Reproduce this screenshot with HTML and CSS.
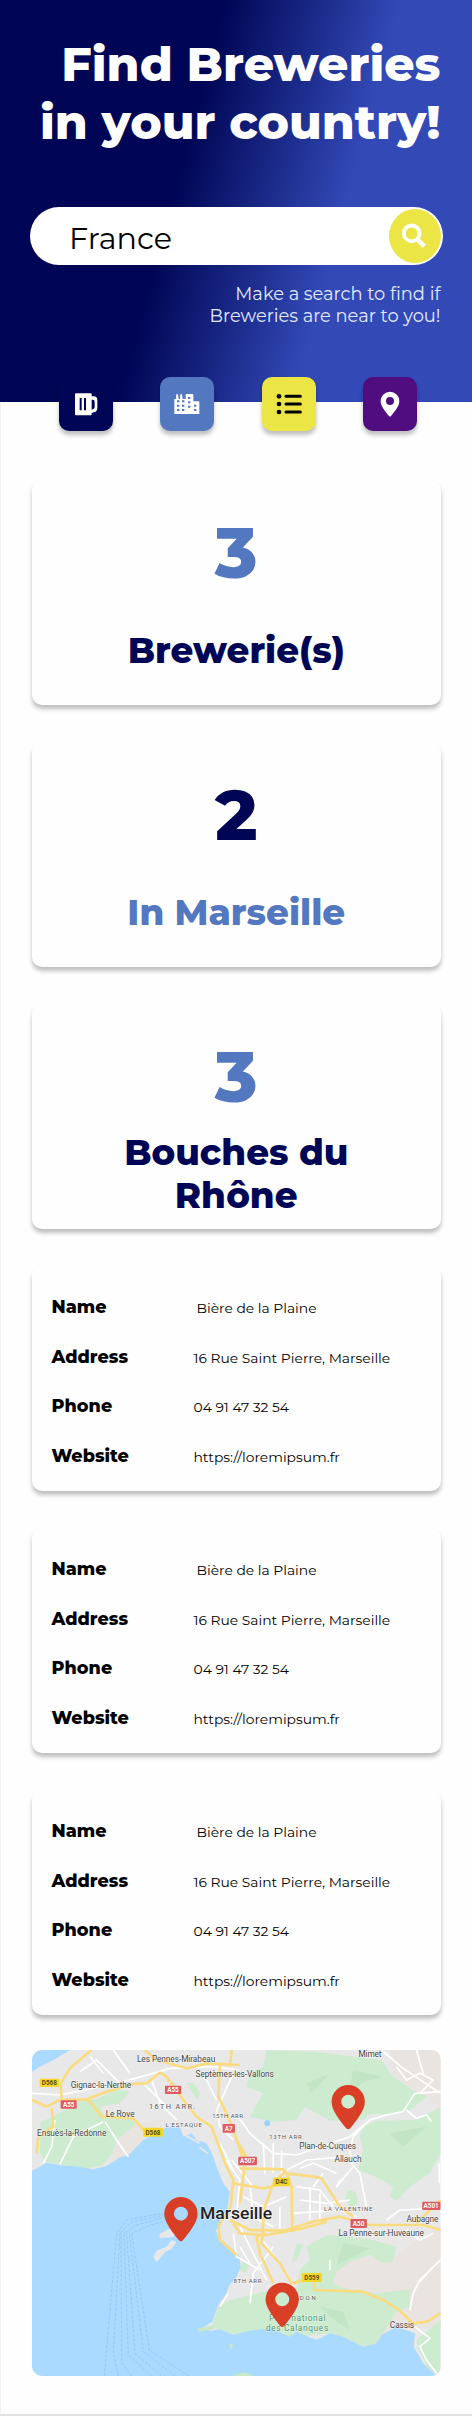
FILE: index.html
```html
<!DOCTYPE html>
<html lang="en">
<head>
<meta charset="utf-8">
<title>Find Breweries</title>
<link rel="stylesheet" href="styles.css">
</head>
<body>
<header class="hero">
  <h1 class="hero-title">Find Breweries<br>in your country!</h1>
  <div class="search">
    <span class="search-value">France</span>
    <button class="search-button" aria-label="Search">
      <svg width="26" height="26" viewBox="0 0 26 26" fill="none" stroke="#fff"><circle cx="10.7" cy="10.4" r="7.9" stroke-width="3.8"/><path d="M16.3 16.4l7 7" stroke-width="4.4"/></svg>
    </button>
  </div>
  <p class="hero-hint">Make a search to find if<br>Breweries are near to you!</p>
</header>
<nav class="tabs">
  <a class="tab tab-beer"><svg width="54" height="54" viewBox="0 0 162 162"><path fill="#fff" fill-rule="evenodd" d="M51 49h44q3 0 3 3v6h6q11 0 11 12v22q0 12-11 14l-6 2v4q0 3-3 3H51q-3 0-3-3V52q0-3 3-3zM98 68v30l5-2q4-1 4-6V75q0-7-5-7zM62 63v37h6V63zM75 63v37h6V63z"/></svg></a>
  <a class="tab tab-city"><svg width="54" height="54" viewBox="0 0 162 162"><path fill="#fff" d="M43 111V66h5l1-14h5l2 14h4l1-14h5l2 14h9V54q0-3 3-3h17q3 0 3 3v19h16q2 0 2 2v36z"/><path fill="#5478c0" d="M51 70h7v6h-7zM66 70h7v6h-7zM51 83h7v6h-7zM66 83h7v6h-7zM51 96h7v6h-7zM66 96h7v6h-7zM84 60h7v6h-7zM84 73h7v6h-7zM84 86h7v6h-7zM102 83h7v6h-7zM102 96h7v6h-7z"/></svg></a>
  <a class="tab tab-list"><svg width="54" height="54" viewBox="0 0 162 162"><circle cx="51" cy="58" r="7"/><circle cx="51" cy="81" r="7"/><circle cx="51" cy="105" r="7"/><path d="M72 58h43M72 81h43M72 105h43" stroke="#000" stroke-width="9" stroke-linecap="round"/></svg></a>
  <a class="tab tab-pin"><svg width="54" height="54" viewBox="0 0 162 162"><path fill="#fff" fill-rule="evenodd" d="M81 44a28 28 0 0 1 28 28c0 16-13 30-25 45q-3 3-6 0C66 102 53 88 53 72a28 28 0 0 1 28-28zm0 16a12 12 0 1 0 0 24 12 12 0 0 0 0-24z"/></svg></a>
</nav>
<main class="cards">
  <section class="card stat"><b class="stat-number sky">3</b><span class="stat-label navy">Brewerie(s)</span></section>
  <section class="card stat"><b class="stat-number navy">2</b><span class="stat-label sky">In Marseille</span></section>
  <section class="card stat stat-two-lines"><b class="stat-number sky">3</b><span class="stat-label navy">Bouches du<br>Rhône</span></section>
  <dl class="card details">
    <dt>Name</dt><dd class="brewery">Bière de la Plaine</dd><dt>Address</dt><dd>16 Rue Saint Pierre, Marseille</dd><dt>Phone</dt><dd>04 91 47 32 54</dd><dt>Website</dt><dd>https://loremipsum.fr</dd>
  </dl>
  <dl class="card details">
    <dt>Name</dt><dd class="brewery">Bière de la Plaine</dd><dt>Address</dt><dd>16 Rue Saint Pierre, Marseille</dd><dt>Phone</dt><dd>04 91 47 32 54</dd><dt>Website</dt><dd>https://loremipsum.fr</dd>
  </dl>
  <dl class="card details">
    <dt>Name</dt><dd class="brewery">Bière de la Plaine</dd><dt>Address</dt><dd>16 Rue Saint Pierre, Marseille</dd><dt>Phone</dt><dd>04 91 47 32 54</dd><dt>Website</dt><dd>https://loremipsum.fr</dd>
  </dl>
</main>
<svg class="map" viewBox="36 30 1226 978" preserveAspectRatio="none">
  <rect x="36" y="30" width="1226" height="978" fill="#e8e8e8"/>
  <!-- terrain -->
  <path fill="#e9e4e0" d="M930 690L1000 655 1120 650 1262 560V860L1130 870 1080 900 950 750zM290 300L350 250 430 240 370 300 320 350 270 370zM1110 30H1262V200L1120 110z"/>
  <path fill="#cdebcf" d="M62 245L100 230 130 212 190 178 230 178 290 150 330 155 300 190 240 200 255 235 330 235 348 252 290 300 275 345 245 378 200 385 110 372 75 365 60 335zM740 30L880 35 1085 60 1120 110 1180 150 1222 170 1170 210 1110 222 1050 222 1030 240 930 242 855 200 830 240 760 246 690 230 730 160 680 140 690 100 730 80zM1030 260L1070 242 1190 240 1262 200V340L1230 400 1170 440 1130 482 1110 470 1120 440 1070 412 1015 390 1030 330 1020 290zM860 620L920 585 990 590 1060 600 1130 620 1120 665 1090 670 1050 645 990 665 950 695 940 730 990 750 1070 760 1170 748 1170 800 1130 815 1070 910 1030 920 970 890 930 880 830 890 640 888 575 860 600 790 730 755 830 745 840 690 870 660zM1190 900L1262 840V1008H1240L1195 930zM500 128L522 130 542 160 530 178zM985 450l22 5 10 35-25 15-15-30zM830 610l20 5-20 45-15 5zM670 665l20 10-15 25-20-15z"/>
  <path fill="#b7e0bd" opacity=".5" d="M1000 90l90 20-60 15-45 40zM860 130l70-30-55 60zM1110 280l110-20-70 60zM970 610l80 15-100 50zM900 800l70 15 20 55-60-40z"/>
  <!-- water -->
  <path fill="#aadaff" d="M36 30H150L100 60 60 80 36 95zM36 392L60 380 80 368 120 376 160 378 220 388 260 378 300 352 325 345 370 300 400 285 440 262 480 262 490 290 515 280 530 300 560 310 578 345 590 380 610 430 630 455 622 510 602 550 588 570 595 595 630 620 660 650 662 682 650 710 628 735 620 760 595 795 578 845 540 868 575 872 600 868 640 885 690 872 750 865 810 890 830 875 890 900 930 880 970 890 1030 920 1070 910 1085 885 1130 860 1185 880 1182 920 1210 970 1250 1008H36z"/>
  <circle cx="742" cy="250" r="9" fill="#9fd0fb"/>
  <path fill="#e8e8e8" d="M418 582l35-18 20 10-15 18-38 2zM400 650l10-18 30-12 15-20 15 5-15 22-20 10-25 30zM500 285l40 22-2 5-40-22zM540 320l25 18-3 4-25-18z"/>
  <path fill="#c5e8cb" d="M532 866l45-10 5 10-45 10zM625 910l15 5-5 15zM640 1005l30-8 28 8v3h-58z"/>
  <!-- ferry routes -->
  <g fill="none" stroke="#8fbfe8" stroke-width="2" stroke-dasharray="9 5"><path d="M253 1008L290 580 320 540 440 518"/><path d="M295 1008L280 940 300 580 335 545 440 524"/><path d="M335 1008L305 970 303 580"/><path d="M395 1008L325 945 312 580 350 555 440 530"/><path d="M425 1008L345 940 320 580"/><path d="M465 1008L370 935 328 580"/><path d="M507 1008L388 930 335 580 380 560 440 540"/></g>
  <!-- minor roads -->
  <g fill="none" stroke="#fff" stroke-width="5" stroke-linejoin="round">
    <path d="M36 160L120 165 290 130 400 100 450 85 580 80 655 90M180 95L230 60 310 140M280 30L330 100M395 120L420 190 470 240M370 130L440 200M105 240L95 320 70 370M250 245L160 290 120 372M255 245L290 300 325 350M530 90L560 120 590 180M640 100L590 210 600 260 640 300M210 50L250 100"/>
    <path d="M655 230L690 280 760 340 830 345 990 290 1050 240 1100 225 1150 215 1185 160 1262 155M1085 30L1150 85 1262 160M1130 80L1160 120 1200 100 1240 120 1200 160M1190 30L1210 100M1050 240L1000 290 990 330 1000 380 950 440 960 420M995 370L1020 400 1040 500M1160 210L1190 235 1220 225 1235 245M800 390L860 360 980 350M840 385L880 370 950 400M730 310L735 400M760 310V400M785 330V410"/>
    <path d="M610 350L660 420 650 520M635 360L700 440M600 310L640 390M670 470L730 500 800 470M690 430L700 530 760 560M830 440L900 450 940 500M840 480L920 490 990 480M820 520L960 510 1010 530M870 440V540M900 460V545M660 560L700 640 740 720M640 580L650 650 720 690M720 590L800 700 820 740M760 620L700 700 690 790M660 620L690 670M625 760L600 800M780 500V580M910 400L880 440"/>
    <path d="M1170 810L1180 760 1200 720 1262 660M1200 725L1240 680M1185 860L1230 895 1200 920 1220 960 1250 1000M1100 540L1140 510 1262 505M930 660V690M1160 570L1200 600 1240 580M1258 370V430"/>
  </g>
  <!-- main roads -->
  <g fill="none" stroke="#fadb80" stroke-width="8" stroke-linejoin="round">
    <path d="M36 180L80 200 120 180 200 178 260 155 340 132 380 130 420 98 440 110 490 180 530 230 575 260 620 380 640 420 632 500 595 560 600 600 650 645M205 178L245 230 340 235 375 275M125 180L122 130 150 85 190 50 215 30M95 205L100 260 55 290 50 340M375 30L410 60 500 85 560 70 660 75M600 75L595 170 625 230 650 300 675 370 660 490M635 30L630 80M455 130L480 160"/>
    <path d="M660 385L790 388 800 400 880 410 905 415 960 500 1000 530M800 400L815 440 817 560M795 395L760 430 735 500 725 600M640 430L730 445 775 435M630 540L690 570 790 572 880 545 960 530 1050 555 1210 555 1262 570M1190 550L1262 480M640 550L660 580 740 585 850 565 920 545"/>
    <path d="M730 580L725 610 780 670 815 730 880 715 885 750 1030 755 1090 780 1140 812 1180 850 1220 845 1262 820M735 580L710 590 720 640 760 730M650 300L690 370"/>
  </g>
  <!-- road shields -->
  <g class="shield">
    <g fill="#f5d629"><rect x="59" y="116" width="58" height="25" rx="3"/><rect x="370" y="263" width="59" height="27" rx="3"/><rect x="760" y="413" width="50" height="26" rx="3"/><rect x="846" y="699" width="60" height="27" rx="3"/></g>
    <g fill="#df5b5f"><rect x="435" y="137" width="49" height="25" rx="3"/><rect x="122" y="181" width="48" height="25" rx="3"/><rect x="608" y="252" width="37" height="26" rx="3"/><rect x="655" y="350" width="56" height="26" rx="3"/><rect x="1207" y="485" width="55" height="25" rx="3"/><rect x="992" y="537" width="49" height="27" rx="3"/></g>
    <g fill="#57501c"><text x="88" y="136">D568</text><text x="399" y="284">D568</text><text x="785" y="433">D4C</text><text x="876" y="719">D559</text></g>
    <g fill="#fff"><text x="459" y="157">A55</text><text x="146" y="201">A55</text><text x="626" y="272">A7</text><text x="683" y="370">A507</text><text x="1234" y="504">A501</text><text x="1016" y="557">A50</text></g>
  </g>
  <!-- places -->
  <g class="place">
    <text x="351" y="65" textLength="235">Les Pennes-Mirabeau</text>
    <text x="152" y="144" textLength="182">Gignac-la-Nerthe</text>
    <text x="527" y="112" textLength="235">Septèmes-les-Vallons</text>
    <text x="257" y="230" textLength="87">Le Rove</text>
    <text x="51" y="289" textLength="208">Ensuès-la-Redonne</text>
    <text x="1016" y="51" textLength="69">Mimet</text>
    <text x="838" y="328" textLength="171">Plan-de-Cuques</text>
    <text x="944" y="367" textLength="81">Allauch</text>
    <text x="1160" y="546" textLength="96">Aubagne</text>
    <text x="956" y="589" textLength="256">La Penne-sur-Huveaune</text>
    <text x="1110" y="863" textLength="73">Cassis</text>
  </g>
  <g class="place district">
    <text class="district-large" x="387" y="207" textLength="139">16TH ARR.</text>
    <text x="437" y="262" textLength="109">L'ESTAQUE</text>
    <text x="577" y="235" textLength="98">15TH ARR.</text>
    <text x="748" y="297" textLength="104">13TH ARR.</text>
    <text x="912" y="514" textLength="146">LA VALENTINE</text>
    <text x="641" y="730" textLength="90">8TH ARR.</text>
    <text x="807" y="781" textLength="81">REDON</text>
  </g>
  <g class="place park"><text x="748" y="843" textLength="169">Parc national</text><text x="738" y="872" textLength="187">des Calanques</text></g>
  <text class="city" x="540" y="537" textLength="217" lengthAdjust="spacingAndGlyphs">Marseille</text>
  <!-- brewery pins -->
  <g fill="#d93f27">
    <path transform="translate(985 185)" fill-rule="evenodd" d="M0-50a50 50 0 0 1 50 50c0 27-26 57-44 80q-6 6-12 0C-24 57-50 27-50 0A50 50 0 0 1 0-50zm0 29a21 21 0 1 0 0 42 21 21 0 0 0 0-42z"/>
    <path transform="translate(483 521)" fill-rule="evenodd" d="M0-50a50 50 0 0 1 50 50c0 27-26 57-44 80q-6 6-12 0C-24 57-50 27-50 0A50 50 0 0 1 0-50zm0 29a21 21 0 1 0 0 42 21 21 0 0 0 0-42z"/>
    <path transform="translate(787 778)" fill-rule="evenodd" d="M0-50a50 50 0 0 1 50 50c0 27-26 57-44 80q-6 6-12 0C-24 57-50 27-50 0A50 50 0 0 1 0-50zm0 29a21 21 0 1 0 0 42 21 21 0 0 0 0-42z"/>
  </g>
</svg>
</body>
</html>
```
FILE: styles.css
```css
* { box-sizing: border-box; }

body {
  margin: 0;
  height: 2416px;
  background: #fefefe;
  border-bottom: 2px solid #e3e3e3;
  box-shadow: inset 1px 0 #f2f2f2;
  font-family: Montserrat, Inter, sans-serif;
}

.hero {
  height: 402px;
  padding: 34.5px 29.5px 0 30px;
  background: linear-gradient(105deg, #000655 39%, #3249b6 69%);
  text-align: right;
}

.hero-title {
  margin: 0 2px 0 0;
  font-size: 47.35px;
  line-height: 58px;
  font-weight: 800;
  color: #fff;
  white-space: nowrap;
}

.search {
  display: flex;
  align-items: center;
  justify-content: space-between;
  height: 58px;
  margin-top: 56.5px;
  padding-left: 39px;
  border-radius: 29px;
  background: #fff;
}

.search-value {
  padding-top: 4px;
  font-size: 30.2px;
  font-weight: 400;
  color: #000;
}

.search-button {
  display: flex;
  align-items: center;
  justify-content: center;
  width: 54px;
  height: 56px;
  margin-right: .5px;
  padding: 0 2px 0 0;
  border: 1px solid #fff;
  border-radius: 50%;
  background: #ebe645;
}

.hero-hint {
  margin: 17.5px 2px 0 0;
  font-size: 17.85px;
  line-height: 22px;
  font-weight: 400;
  color: #e3eaff;
}

.tabs {
  position: relative;
  display: flex;
  justify-content: space-between;
  margin-top: -25.5px;
  padding: 0 55px 0 58.5px;
}

.tab {
  width: 54px;
  height: 54px;
  border-radius: 10px;
  box-shadow: 0 4px 4px rgba(0, 0, 0, .25);
}

.tab svg { display: block; }
.tab-beer { background: #000655; }
.tab-city { background: #5478c0; }
.tab-list { background: #ebe645; }
.tab-pin { background: #4f0d7f; }

.cards {
  display: flex;
  flex-direction: column;
  gap: 37px;
  margin: 49.5px 31.5px 0 32px;
}

.card {
  height: 225px;
  margin: 0;
  border-radius: 10px;
  background: #fefefe;
  box-shadow: 0 4px 4px rgba(0, 0, 0, .25);
}

.stat {
  display: flex;
  flex-direction: column;
  align-items: center;
  padding-top: 42.5px;
  text-align: center;
}

.stat-number {
  font-size: 71px;
  line-height: 60px;
  font-weight: 800;
}

.stat-label {
  margin-top: 46px;
  font-size: 35.6px;
  line-height: 43.5px;
  font-weight: 800;
}

.stat-two-lines .stat-label { margin-top: 24px; }
.navy { color: #000655; }
.sky { color: #5478c0; }

.details {
  display: grid;
  grid-template-columns: 142px 1fr;
  grid-auto-rows: 49.5px;
  align-items: baseline;
  padding: 30px 0 0 19.5px;
  color: #000;
}

.details dt {
  font-size: 17.6px;
  line-height: 22px;
  font-weight: 800;
}

.details dd {
  margin: 0;
  font-size: 13.85px;
  white-space: nowrap;
}

.details .brewery { padding-left: 3px; }

.map {
  display: block;
  width: 408.5px;
  height: 326px;
  margin: 35px 0 0 32px;
  border-radius: 10px;
}

.shield {
  font: 700 19px Roboto, sans-serif;
  text-anchor: middle;
}

.place {
  font: 25px Roboto, sans-serif;
  fill: #444;
  stroke: #fff;
  stroke-width: 3px;
  stroke-opacity: .6;
  paint-order: stroke;
}

.district { font-size: 18px; fill: #555; }
.district-large { font-size: 22px; }
.park { fill: #4a9465; }

.city {
  font: 500 50px Roboto, sans-serif;
  fill: #222;
  stroke: #fff;
  stroke-width: 4px;
  stroke-opacity: .6;
  paint-order: stroke;
}
```
